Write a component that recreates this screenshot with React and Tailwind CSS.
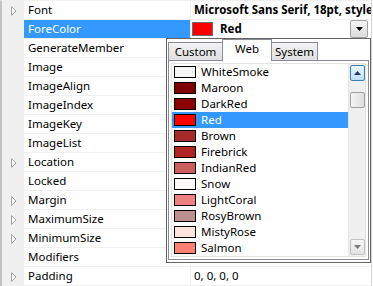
import React from "react";

const props = [
  { name: "Font", exp: true, value: "Microsoft Sans Serif, 18pt, style=Bold", bold: true },
  { name: "ForeColor", sel: true, color: true },
  { name: "GenerateMember" },
  { name: "Image" },
  { name: "ImageAlign" },
  { name: "ImageIndex" },
  { name: "ImageKey" },
  { name: "ImageList" },
  { name: "Location", exp: true },
  { name: "Locked" },
  { name: "Margin", exp: true },
  { name: "MaximumSize", exp: true },
  { name: "MinimumSize", exp: true },
  { name: "Modifiers" },
  { name: "Padding", exp: true, value: "0, 0, 0, 0" },
];

const colors = [
  ["WhiteSmoke", "#f5f5f5"],
  ["Maroon", "#800000"],
  ["DarkRed", "#8b0000"],
  ["Red", "#ff0000"],
  ["Brown", "#a52a2a"],
  ["Firebrick", "#b22222"],
  ["IndianRed", "#cd5c5c"],
  ["Snow", "#fffafa"],
  ["LightCoral", "#f08080"],
  ["RosyBrown", "#bc8f8f"],
  ["MistyRose", "#ffe4e1"],
  ["Salmon", "#fa8072"],
];

function Expander() {
  return (
    <svg width="6" height="10" viewBox="0 0 6 10">
      <polygon points="0.5,0.5 5,5 0.5,9.5" fill="#fff" stroke="#a6a6a6" />
    </svg>
  );
}

function Row({ p }) {
  return (
    <div className="flex h-[19px]">
      <div className="w-[22px] bg-[#f0f0f0] flex items-center pl-[9px]">{p.exp && <Expander />}</div>
      <div className={`w-[166px] border-b border-[#f0f0f0] pl-[4px] leading-[18px] whitespace-nowrap ${p.sel ? "bg-[#3399ff] text-white" : ""}`}>
        {p.name}
      </div>
      <div className="w-px bg-[#f0f0f0]" />
      <div className="flex-1 min-w-0 border-b border-[#f0f0f0] flex items-center pl-[3px] whitespace-nowrap overflow-hidden">
        {p.color ? (
          <>
            <span className="w-[21px] h-[14px] bg-[#ff0000] border border-[#6d6d6d] -ml-[2px]" />
            <span className="ml-[7px] font-bold leading-[18px]">Red</span>
            <span className="ml-auto mr-[3px] w-[18px] h-[18px] border border-[#a3a3a3] rounded-[2px] bg-gradient-to-b from-[#f4f4f4] to-[#dcdcdc] flex items-center justify-center">
              <svg width="7" height="4" viewBox="0 0 7 4"><polygon points="0,0 7,0 3.5,4" fill="#000" /></svg>
            </span>
          </>
        ) : (
          <span className={`leading-[18px] ${p.bold ? "font-bold" : ""}`}>{p.value}</span>
        )}
      </div>
    </div>
  );
}

function Tab({ label, active, w }) {
  if (active)
    return (
      <div className={`${w} h-[22px] -mb-px relative z-10 border border-b-0 border-[#898c95] bg-white leading-[18px] text-center`}>
        {label}
      </div>
    );
  return (
    <div className={`${w} h-[18px] border border-b-0 border-[#898c95] bg-gradient-to-b from-[#f2f2f2] to-[#e0e0e0] leading-[17px] text-center`}>
      {label}
    </div>
  );
}

export default function App() {
  return (
    <div className="relative w-[373px] h-[286px] bg-white overflow-hidden font-['Noto_Sans',sans-serif] text-[11.5px] text-black">
      <div className="border-l-2 border-[#c4c4c4] border-t border-t-[#f0f0f0] w-[372px] border-r border-r-[#d6d6d6] h-full">
        {props.map((p) => (
          <Row key={p.name} p={p} />
        ))}
      </div>

      <div className="absolute left-[166px] top-[38px] w-[205px] h-[225px] border border-[#646464] bg-white flex flex-col">
        <div className="flex items-end h-[22px] pl-px">
          <Tab label="Custom" w="w-[55px]" />
          <Tab label="Web" active w="w-[50px] -ml-px" />
          <Tab label="System" w="w-[47px] -ml-px" />
        </div>
        <div className="mx-[1px] mb-[2px] flex-1 border border-[#898c95] bg-white p-[2px] flex">
          <div className="flex-1 flex border border-[#e3e3e3]">
            <div className="flex-1">
              {colors.map(([n, c]) => (
                <div key={n} className={`h-[16px] flex items-center ${n === "Red" ? "bg-[#3399ff] text-white" : ""}`}>
                  <span className="ml-[2px] w-[22px] h-[12px] border border-black" style={{ backgroundColor: c }} />
                  <span className="ml-[5px] leading-[16px]">{n}</span>
                </div>
              ))}
            </div>
            <div className="w-[17px] bg-[#f0f0f0] border-l border-[#e6e6e6] flex flex-col items-center py-px">
              <div className="w-[15px] h-[16px] rounded-[2px] border border-[#3c7fb1] bg-gradient-to-b from-[#e8f4fc] to-[#bde0f7] flex items-center justify-center">
                <svg width="7" height="4" viewBox="0 0 7 4"><polygon points="0,4 7,4 3.5,0" fill="#1c3f6e" /></svg>
              </div>
              <div className="mt-[11px] w-[15px] h-[16px] rounded-[2px] border border-[#a0a0a0] bg-gradient-to-r from-[#f4f4f4] to-[#dedede]" />
              <div className="mt-auto w-[15px] h-[16px] rounded-[2px] border border-[#c0c0c0] bg-gradient-to-b from-[#f6f6f6] to-[#e2e2e2] flex items-center justify-center">
                <svg width="7" height="4" viewBox="0 0 7 4"><polygon points="0,0 7,0 3.5,4" fill="#7a7a7a" /></svg>
              </div>
            </div>
          </div>
        </div>
      </div>
    </div>
  );
}
